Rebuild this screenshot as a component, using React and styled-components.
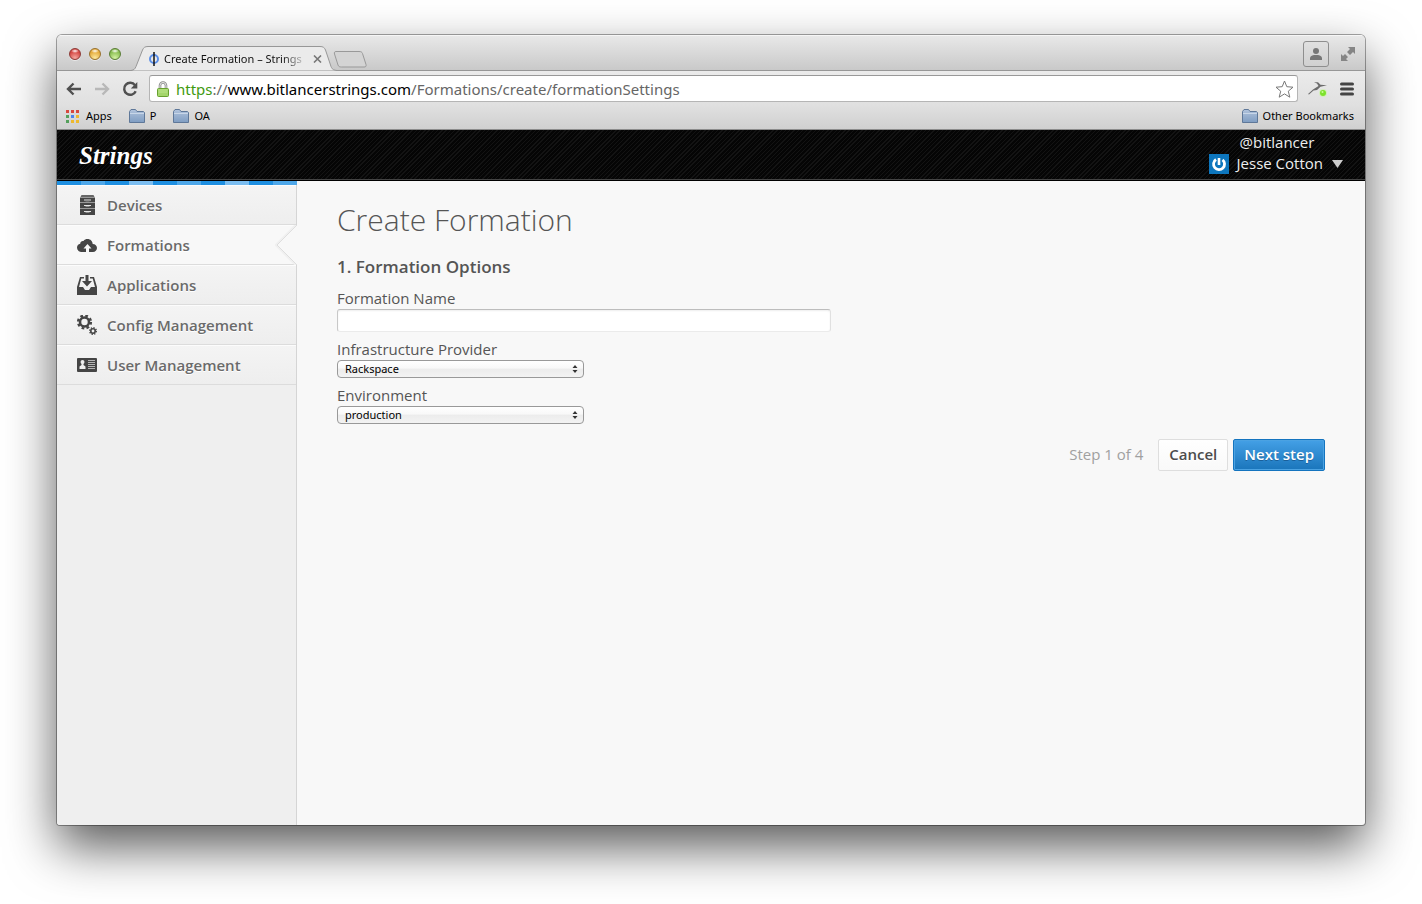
import React from "react";
import styled, { createGlobalStyle } from "styled-components";

const chromeFont = `"Noto Sans", "Open Sans", sans-serif`;
const pageFont = `"Open Sans", "Noto Sans", sans-serif`;

const GlobalStyle = createGlobalStyle`
  *, *::before, *::after { box-sizing: border-box; }
  body { margin: 0; background: #fff; font-family: ${pageFont}; }
  button, input, select { font: inherit; margin: 0; }
  button { cursor: pointer; }
  svg { display: block; flex: none; }
  h1, h2 { margin: 0; }
`;

const Desktop = styled.div`
  display: flex;
  min-height: 100vh;
  padding: 35px 57px 79px;
`;

const BrowserWindow = styled.div`
  flex: 1;
  min-width: 0;
  display: flex;
  flex-direction: column;
  overflow: hidden;
  border-radius: 5px 5px 3px 3px;
  background: #f8f8f8;
  box-shadow: 0 0 0 1px rgba(0, 0, 0, 0.34), 0 22px 50px rgba(0, 0, 0, 0.65);
`;

const TitleBar = styled.div`
  display: flex;
  align-items: flex-end;
  height: 36px;
  padding: 0 9px 0 12px;
  background: linear-gradient(#e9e9e9, #c9c9c9);
  border-bottom: 1px solid #979797;
  box-shadow: inset 0 1px #f6f6f6;
`;

const Lights = styled.div`
  display: flex;
  gap: 8px;
  padding-bottom: 10px;
`;

const Light = styled.button`
  width: 12px;
  height: 12px;
  padding: 0;
  border: 1px solid ${(p) => p.$edge};
  border-radius: 50%;
  background: radial-gradient(ellipse 4px 2px at 50% 20%, #fff, transparent),
    radial-gradient(circle at 50% 90%, ${(p) => p.$glow}, ${(p) => p.$color} 70%);
  box-shadow: 0 1px rgba(255, 255, 255, 0.5);
`;

const Tab = styled.div`
  position: relative;
  display: flex;
  align-items: center;
  width: 206px;
  height: 25px;
  margin: 0 0 -1px 10px;
  padding: 0 13px 0 18px;
  font: 11px/16px ${chromeFont};
  color: #111;
`;

const TabShape = styled.svg`
  position: absolute;
  inset: 0;
`;

const TabTitle = styled.span`
  position: relative;
  flex: 1;
  margin-left: 5px;
  overflow: hidden;
  white-space: nowrap;
  mask-image: linear-gradient(90deg, #000 82%, transparent);
`;

const PlainButton = styled.button`
  position: relative;
  display: flex;
  padding: 0;
  border: 0;
  background: none;
`;

const NewTab = styled(PlainButton)`
  margin: 0 0 2px -4px;
`;

const WindowActions = styled.div`
  display: flex;
  align-items: center;
  gap: 11px;
  margin: 0 0 3px auto;
`;

const ProfileButton = styled(PlainButton)`
  align-items: center;
  justify-content: center;
  width: 26px;
  height: 26px;
  border: 1px solid #8e8e8e;
  border-radius: 3px;
  background: linear-gradient(#e0e0e0, #d0d0d0);
`;

const Toolbar = styled.div`
  display: flex;
  align-items: center;
  gap: 12px;
  height: 34px;
  padding: 1px 11px 0 9px;
  background: linear-gradient(#ebebeb, #e0e0e0);
`;

const AddressBar = styled.form`
  flex: 1;
  display: flex;
  align-items: center;
  gap: 7px;
  height: 27px;
  padding: 0 3px 0 7px;
  margin: 0 -2px 0 -1px;
  border: 1px solid #b5b5b5;
  border-top-color: #999;
  border-radius: 3px;
  background: #fff;
`;

const Address = styled.a`
  flex: 1;
  font: 15px/20px ${chromeFont};
  color: #666;
  text-decoration: none;
  white-space: nowrap;
`;

const Scheme = styled.span`
  color: #3f9a10;
`;

const Host = styled.span`
  color: #000;
`;

const Bookmarks = styled.nav`
  display: flex;
  align-items: center;
  gap: 17px;
  height: 25px;
  padding: 0 11px 2px 9px;
  background: linear-gradient(#e0e0e0, #d0d0d0);
  border-bottom: 1px solid #8c8c8c;
`;

const Bookmark = styled.a`
  display: flex;
  align-items: center;
  gap: ${(p) => p.$gap || 5}px;
  margin-left: ${(p) => (p.$last ? "auto" : 0)};
  font: 11px/16px ${chromeFont};
  color: #000;
  text-decoration: none;
`;

const SiteHeader = styled.header`
  display: flex;
  justify-content: space-between;
  height: 51px;
  padding: 0 22px;
  color: #eee;
  background: repeating-linear-gradient(135deg, #050505 0 2px, #131313 2px 3px);
  border-bottom: 1px solid #000;
  box-shadow: inset 0 -1px #444;
`;

const Logo = styled.a`
  padding-top: 8px;
  font: italic 700 25px/36px "Liberation Serif", serif;
  color: #fff;
  text-decoration: none;
`;

const Account = styled.div`
  display: flex;
  flex-direction: column;
  padding-top: 2px;
  font-size: 15px;
  line-height: 21px;
`;

const AccountName = styled.span`
  padding-left: 31px;
`;

const UserMenu = styled(PlainButton)`
  align-items: center;
  gap: 8px;
  color: inherit;
`;

const Body = styled.div`
  flex: 1;
  display: flex;
`;

const Sidebar = styled.nav`
  width: 240px;
  flex: none;
  background: linear-gradient(90deg, transparent 239px, #d5d5d5 239px), #efefef;
`;

const Stripe = styled.div`
  height: 4px;
  background: repeating-linear-gradient(
    90deg,
    #1e8fe1 0 24px,
    #4ea7e9 24px 48px,
    #1e8fe1 48px 72px,
    #7bbdf0 72px 96px
  );
`;

const NavItem = styled.a`
  position: relative;
  display: flex;
  align-items: center;
  gap: 10px;
  height: 40px;
  margin-right: ${(p) => (p.$active ? 0 : 1)}px;
  padding-left: 20px;
  font-size: 15px;
  font-weight: 600;
  color: #6a6a6a;
  text-decoration: none;
  text-shadow: 0 1px #fff;
  background: ${(p) => (p.$active ? "#f8f8f8" : "linear-gradient(#f4f4f4, #eeeeee)")};
  border-top: 1px solid #fcfcfc;
  border-bottom: 1px solid #dcdcdc;
`;

const Notch = styled.svg`
  position: absolute;
  top: -1px;
  right: 0;
`;

const Main = styled.main`
  flex: 1;
  min-width: 0;
  padding: 19px 40px;
  color: #555;
`;

const Title = styled.h1`
  font-size: 30px;
  line-height: 40px;
  font-weight: 300;
`;

const SectionTitle = styled.h2`
  margin: 15px 0 9px;
  font-size: 17px;
  line-height: 24px;
  font-weight: 600;
`;

const Field = styled.div`
  display: flex;
  flex-direction: column;
  align-items: flex-start;
  gap: 1px;
  margin-bottom: 7px;
`;

const Label = styled.label`
  font-size: 15px;
  line-height: 20px;
`;

const TextInput = styled.input`
  width: 50%;
  height: 23px;
  border: 1px solid;
  border-color: #bdbdbd #e0e0e0 #ebebeb #c8c8c8;
  border-radius: 3px;
  background: #fff;
  box-shadow: inset 0 1px 2px #eee;
`;

const SelectWrap = styled.div`
  position: relative;
  width: 25%;
`;

const Select = styled.select`
  appearance: none;
  display: block;
  width: 100%;
  height: 18px;
  padding: 0 7px;
  font: 11px/16px ${chromeFont};
  color: #000;
  border: 1px solid #999;
  border-radius: 4px;
  background: linear-gradient(#fff, #f8f8f8 45%, #ececec 50%, #f3f3f3);
`;

const SelectArrows = styled.svg`
  position: absolute;
  top: 5px;
  right: 6px;
  pointer-events: none;
`;

const Actions = styled.div`
  display: flex;
  justify-content: flex-end;
  align-items: center;
  gap: 5px;
  padding-top: 8px;
`;

const StepLabel = styled.span`
  margin-right: 10px;
  padding-bottom: 2px;
  font-size: 15px;
  color: #a0a0a0;
`;

const Button = styled.button`
  height: 32px;
  padding: 0 10px 2px;
  font-size: 15px;
  font-weight: 600;
  border-radius: 2px;
  color: ${(p) => (p.$primary ? "#fff" : "#4c4c4c")};
  text-shadow: ${(p) => (p.$primary ? "0 1px #1a5f99" : "0 1px #fff")};
  border: 1px solid ${(p) => (p.$primary ? "#1474bf" : "#dedede")};
  background: ${(p) =>
    p.$primary ? "linear-gradient(#44a0e6, #1a75bb)" : "linear-gradient(#fff, #f9f9f9)"};
  box-shadow: ${(p) => (p.$primary ? "inset 0 0 0 1px #4ba2e2" : "none")};
`;

const Folder = () => (
  <svg width="16" height="14" viewBox="0 0 16 14">
    <defs>
      <linearGradient id="folder" x2="0" y2="1">
        <stop stopColor="#b1c3dc" />
        <stop offset="1" stopColor="#7f9dc2" />
      </linearGradient>
    </defs>
    <path d="M.5 13.5V2.5L2 .5h4.5L8 2.5h6.500l1 1v10z" fill="url(#folder)" stroke="#5f7899" />
    <path d="M1 4.500h14" stroke="#c8d6e8" />
  </svg>
);

const AppsGrid = () => (
  <svg width="14" height="14" viewBox="0 0 14 14">
    <path d="M0 1h3v3H0zM5 1h3v3H5zM10 1h3v3h-3z" fill="#d8483d" />
    <path d="M0 6h3v3H0zM0 11h3v3H0z" fill="#54a05b" />
    <path d="M5 6h3v3H5z" fill="#4b84ee" />
    <path d="M10 6h3v3h-3zM5 11h3v3H5zM10 11h3v3h-3z" fill="#edb92e" />
  </svg>
);

const Arrow = ({ color, flip }) => (
  <svg width="16" height="14" viewBox="0 0 16 14">
    <path
      d="M7.500 1.500 2 7l5.500 5.500M2.500 7H15"
      transform={flip ? "matrix(-1 0 0 1 16 0)" : undefined}
      fill="none"
      stroke={color}
      strokeWidth="2.400"
    />
  </svg>
);

const Reload = () => (
  <svg width="16" height="16" viewBox="0 0 16 16">
    <path d="M13 4.200A6 6 0 1 0 13.700 10.200" fill="none" stroke="#505050" strokeWidth="2.400" />
    <path d="M15.300 1v6.500H8.800z" fill="#505050" />
  </svg>
);

const Lock = () => (
  <svg width="12" height="16" viewBox="0 0 12 16">
    <path d="M3 8V4.500a3 3 0 0 1 6 0V8" fill="none" stroke="#8a8a8a" strokeWidth="2.600" />
    <path d="M3 8V4.500a3 3 0 0 1 6 0V8" fill="none" stroke="#e8e8e8" />
    <rect x=".5" y="7.500" width="11" height="8" rx="1" fill="#a4d66b" stroke="#67a12f" />
    <path d="M1.500 9h9M1.500 11h9" stroke="#bce58c" />
  </svg>
);

const Star = () => (
  <svg width="19" height="18" viewBox="0 0 19 18">
    <path
      d="m9.500 1 2.300 5.700 6.200.5-4.700 4 1.500 6-5.300-3.300-5.300 3.300 1.500-6-4.700-4 6.200-.5z"
      fill="#fff"
      stroke="#777"
      strokeLinejoin="round"
    />
  </svg>
);

const Hummingbird = () => (
  <svg width="20" height="16" viewBox="0 0 20 16">
    <path
      d="M6 1.200h4l2.500 2.600 6.500.4-6.500 1.500L9 9l-3.500.6L1 13.500 0 13l5-4.500L10.500 5 9 2.600z"
      fill="#6c6c6c"
    />
    <circle cx="15" cy="12" r="4" fill="#c9f5a2" opacity=".6" />
    <circle cx="15" cy="12" r="3" fill="#7ee22d" />
    <circle cx="14.500" cy="11" r="1" fill="#c9ff9b" />
  </svg>
);

const Expand = () => (
  <svg width="16" height="16" viewBox="0 0 16 16" fill="#858585">
    <path d="M8 1h7v7l-2-2-3 3-3-3 3-3zM1 8l2 2 2-2 3 3-2 2 2 2H1z" />
  </svg>
);

const Cabinet = () => (
  <svg width="20" height="20" viewBox="0 0 20 20">
    <path d="M4.500 0h12l1 2h-14z" fill="#666" />
    <path d="M3 3h15v4H3zM3 8h15v5H3zM3 14h15v6H3z" fill="#454545" />
    <path d="M3 2.500h15M3 7.500h15M3 13.500h15" stroke="#999" />
    <path d="M7 5h7M7 10.500h7M7 16.500h7" stroke="#e4e4e4" />
    <path d="M8.500 6h4M8.500 11.500h4M8.500 17.500h4" stroke="#8a8a8a" />
  </svg>
);

const CloudUpload = () => (
  <svg width="20" height="20" viewBox="0 0 20 20">
    <path
      d="M5 17a4.500 4.500 0 0 1-5-4.300c0-2.200 1.300-3.700 3.200-4 .2-2 1.500-3 3.300-2.700C7.500 4.500 9 4 10.500 4c3 0 5 2.200 5.200 5 2.600.1 4.300 1.700 4.300 4s-1.800 4-4 4z"
      fill="#454545"
    />
    <path d="m10.500 9 4 4.500H12V17H9v-3.500H6.500z" fill="#f8f8f8" />
  </svg>
);

const InboxDown = () => (
  <svg width="20" height="20" viewBox="0 0 20 20" fill="#454545">
    <path d="M3 2h4v1.500H4.300L2 12h4l2 3h4l2-3h4l-2.300-8.500H13V2h4l3 10v8H0v-8z" />
    <path d="M8.500 0h3v6H15l-5 5.500L5 6h3.500z" />
  </svg>
);

const Gears = () => (
  <svg width="20" height="20" viewBox="0 0 20 20" fill="none" stroke="#454545">
    <circle cx="7.500" cy="7" r="4.500" strokeWidth="2.600" />
    <circle cx="7.500" cy="7" r="6.400" strokeWidth="2.400" strokeDasharray="2.700 2.327" />
    <circle cx="16" cy="16" r="2.200" strokeWidth="1.600" />
    <circle cx="16" cy="16" r="3.300" strokeWidth="1.400" strokeDasharray="1.300 1.290" />
  </svg>
);

const IdCard = () => (
  <svg width="20" height="20" viewBox="0 0 20 20">
    <rect y="3" width="20" height="14" rx="1" fill="#454545" />
    <circle cx="5.500" cy="7" r="2" fill="#eee" />
    <path d="M4.500 8h2v2l2 1.500V14h-6v-2.500l2-1.500z" fill="#eee" />
    <path d="M11 5.500h7M11 7.500h7M11 9.500h7M11 11.500h7M11 13.500h7" stroke="#b5b5b5" />
  </svg>
);

const navItems = [
  { label: "Devices", Icon: Cabinet },
  { label: "Formations", Icon: CloudUpload, active: true },
  { label: "Applications", Icon: InboxDown },
  { label: "Config Management", Icon: Gears },
  { label: "User Management", Icon: IdCard },
];

function SelectField({ id, label, value }) {
  return (
    <Field>
      <Label htmlFor={id}>{label}</Label>
      <SelectWrap>
        <Select id={id} defaultValue={value}>
          <option>{value}</option>
        </Select>
        <SelectArrows width="6" height="8" viewBox="0 0 6 8">
          <path d="M.5 3 3 0l2.500 3zM.5 5 3 8l2.500-3z" fill="#333" />
        </SelectArrows>
      </SelectWrap>
    </Field>
  );
}

export default function App() {
  return (
    <Desktop>
      <GlobalStyle />
      <BrowserWindow>
        <TitleBar>
          <Lights>
            <Light aria-label="Close" $edge="#8d3a36" $color="#d2403c" $glow="#f5a8a0" />
            <Light aria-label="Minimize" $edge="#98712c" $color="#e3a633" $glow="#fde9a0" />
            <Light aria-label="Zoom" $edge="#5a7d35" $color="#83b94a" $glow="#d5f3a4" />
          </Lights>
          <Tab>
            <TabShape width="206" height="25" viewBox="0 0 206 25">
              <path
                d="M0 24.500C3 24 4 23 5 20.500L11.500 4C12.500 1.500 14 .5 17 .5H189c3 0 4.500 1 5.500 3.500L200 20.500c1 2.500 2 3.500 6 4"
                fill="#ebebeb"
                stroke="#979797"
              />
            </TabShape>
            <PlainButton as="span">
              <svg width="10" height="14" viewBox="0 0 10 14">
                <circle cx="5" cy="7" r="4" fill="none" stroke="#5b8fe8" strokeWidth="2" />
                <path d="M5 0v14" stroke="#111" strokeWidth="1.500" />
              </svg>
            </PlainButton>
            <TabTitle>Create Formation – Strings</TabTitle>
            <PlainButton aria-label="Close tab">
              <svg width="16" height="8" viewBox="0 0 16 8">
                <path d="m6 .5 7 7m0-7-7 7" stroke="#777" strokeWidth="1.600" />
              </svg>
            </PlainButton>
          </Tab>
          <NewTab aria-label="New tab">
            <svg width="34" height="17" viewBox="0 0 34 17">
              <path
                d="M3 .5h23c2 0 3 .5 3.500 2l3.500 11c.5 2-.5 2.500-2 2.500H8.500c-2 0-3-.5-3.500-2L1.500 3C1 1.500 1.500.5 3 .5z"
                fill="#d4d4d4"
                stroke="#999"
              />
            </svg>
          </NewTab>
          <WindowActions>
            <ProfileButton aria-label="Profile">
              <svg width="12" height="12" viewBox="0 0 12 12" fill="#777">
                <circle cx="6" cy="3" r="3" />
                <path d="M0 12V9.500C1 7.500 3 7 6 7s5 .5 6 2.500V12z" />
              </svg>
            </ProfileButton>
            <PlainButton aria-label="Full screen">
              <Expand />
            </PlainButton>
          </WindowActions>
        </TitleBar>
        <Toolbar>
          <PlainButton aria-label="Back">
            <Arrow color="#505050" />
          </PlainButton>
          <PlainButton aria-label="Forward">
            <Arrow color="#b8b8b8" flip />
          </PlainButton>
          <PlainButton aria-label="Reload">
            <Reload />
          </PlainButton>
          <AddressBar>
            <Lock />
            <Address href="#address">
              <Scheme>https</Scheme>://<Host>www.bitlancerstrings.com</Host>
              /Formations/create/formationSettings
            </Address>
            <PlainButton type="button" aria-label="Bookmark this page">
              <Star />
            </PlainButton>
          </AddressBar>
          <PlainButton aria-label="Extension">
            <Hummingbird />
          </PlainButton>
          <PlainButton aria-label="Menu">
            <svg width="14" height="14" viewBox="0 0 14 14">
              <path d="M1.500 2h11M1.500 7h11M1.500 12h11" stroke="#444" strokeWidth="3" strokeLinecap="round" />
            </svg>
          </PlainButton>
        </Toolbar>
        <Bookmarks>
          <Bookmark href="#apps" $gap={6}>
            <AppsGrid />
            Apps
          </Bookmark>
          <Bookmark href="#p">
            <Folder />P
          </Bookmark>
          <Bookmark href="#oa">
            <Folder />
            OA
          </Bookmark>
          <Bookmark href="#other" $last>
            <Folder />
            Other Bookmarks
          </Bookmark>
        </Bookmarks>
        <SiteHeader>
          <Logo href="#home">Strings</Logo>
          <Account>
            <AccountName>@bitlancer</AccountName>
            <UserMenu>
              <svg width="20" height="20" viewBox="0 0 20 20">
                <rect width="20" height="20" fill="#0d76bd" />
                <path d="M7 5.500a5.500 5.500 0 1 0 6.500.3" fill="none" stroke="#fff" strokeWidth="2.800" />
                <path d="M10 4v7" stroke="#fff" strokeWidth="2.600" />
              </svg>
              Jesse Cotton
              <svg width="12" height="8" viewBox="0 0 12 8">
                <path d="M1 0h11L6.500 8z" fill="#ccc" />
              </svg>
            </UserMenu>
          </Account>
        </SiteHeader>
        <Body>
          <Sidebar>
            <Stripe />
            {navItems.map(({ label, Icon, active }) => (
              <NavItem key={label} href={"#" + label} $active={active}>
                <Icon />
                {label}
                {active && (
                  <Notch width="22" height="40" viewBox="0 0 22 40">
                    <path d="M22 0 2 20l20 20" fill="#f8f8f8" stroke="#f0f0f0" strokeWidth="4" />
                    <path d="M22 0 2 20l20 20" fill="#f8f8f8" stroke="#dedede" />
                  </Notch>
                )}
              </NavItem>
            ))}
          </Sidebar>
          <Main>
            <Title>Create Formation</Title>
            <SectionTitle>1. Formation Options</SectionTitle>
            <Field>
              <Label htmlFor="name">Formation Name</Label>
              <TextInput id="name" />
            </Field>
            <SelectField id="provider" label="Infrastructure Provider" value="Rackspace" />
            <SelectField id="environment" label="Environment" value="production" />
            <Actions>
              <StepLabel>Step 1 of 4</StepLabel>
              <Button type="button">Cancel</Button>
              <Button type="button" $primary>
                Next step
              </Button>
            </Actions>
          </Main>
        </Body>
      </BrowserWindow>
    </Desktop>
  );
}
